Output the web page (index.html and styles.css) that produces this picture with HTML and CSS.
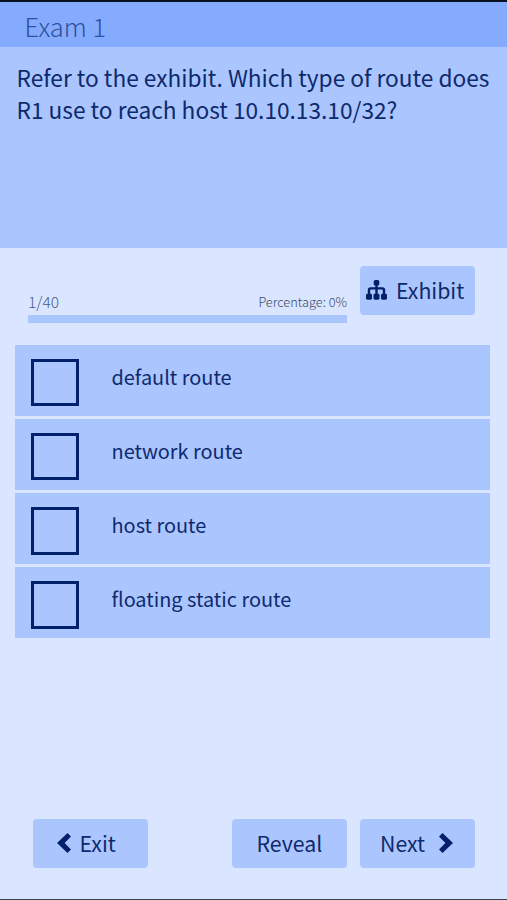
FILE: index.html
```html
<!DOCTYPE html>
<html lang="en">
<head>
<meta charset="utf-8">
<title>Exam 1</title>
<link rel="stylesheet" href="styles.css">
</head>
<body>
<main class="app">
  <header class="title"><span>Exam 1</span></header>
  <section class="question">
    <p><span class="line-one">Refer to the exhibit. Which type of route does</span><br><span class="line-two">R1 use to reach host 10.10.13.10/32?</span></p>
  </section>
  <section class="status">
    <div class="progress">
      <div class="labels"><span class="count">1/40</span><span class="percent">Percentage: 0%</span></div>
      <div class="track"></div>
    </div>
    <button class="btn exhibit">
      <svg class="sitemap" viewBox="0 0 21 20"><path d="M10.500 4v11M3 15v-5q0-1.600 1.600-1.600h11.800q1.600 0 1.600 1.600V15" fill="none" stroke="currentColor" stroke-width="2.400"/><rect x="7.700" y="0" width="5.600" height="5.600" rx="1.600"/><rect x="0" y="13.700" width="6" height="6" rx="1.400"/><rect x="7.500" y="13.700" width="6" height="6" rx="1.400"/><rect x="15" y="13.700" width="6" height="6" rx="1.400"/></svg>
      <span>Exhibit</span>
    </button>
  </section>
  <ul class="options">
    <li><i class="box"></i><span>default route</span></li>
    <li><i class="box"></i><span>network route</span></li>
    <li><i class="box"></i><span>host route</span></li>
    <li><i class="box"></i><span>floating static route</span></li>
  </ul>
  <footer class="actions">
    <button class="btn exit"><svg class="chevron" viewBox="0 0 14 20"><path d="M10.500 0L14 3.500 7.600 10 14 16.500 10.500 20 0 10z"/></svg><span>Exit</span></button>
    <button class="btn reveal"><span>Reveal</span></button>
    <button class="btn next"><span>Next</span><svg class="chevron" viewBox="0 0 14 20"><path d="M3.500 0L0 3.500 6.400 10 0 16.500 3.500 20 14 10z"/></svg></button>
  </footer>
</main>
</body>
</html>
```
FILE: styles.css
```css
* { box-sizing: border-box; }
body {
  margin: 0;
  background: #dae6ff;
  color: #0e2a6c;
  font-family: "Noto Sans CJK JP", "Noto Sans", sans-serif;
}
.app {
  height: 900px;
  display: flex;
  flex-direction: column;
  border-top: 2px solid #0a1020;
  border-bottom: 1px solid #34454f;
  white-space: nowrap;
}
.title {
  height: 45px;
  padding: 4px 0 0 24.500px;
  background: #85abff;
  color: #2f509b;
  font-size: 25.500px;
  font-weight: 300;
  line-height: 40px;
}
.question {
  height: 201px;
  padding: 15px 0 0 16.500px;
  background: #abc5ff;
  font-size: 22.700px;
  line-height: 32px;
}
.question p { margin: 0; }
.status {
  height: 96.500px;
  display: flex;
  gap: 13px;
  padding: 18px 0 0 28px;
}
.progress { width: 319px; padding-top: 23px; }
.labels {
  display: flex;
  justify-content: space-between;
  height: 26px;
  line-height: 25px;
  color: #4b5a86;
  font-weight: 300;
}
.count { font-size: 15.500px; }
.percent { font-size: 12.800px; color: #3f4b69; }
.track { height: 8px; background: #abc5ff; }
.btn {
  display: flex;
  align-items: center;
  width: 115px;
  height: 48.500px;
  padding: 0;
  border: 0;
  border-radius: 4px;
  background: #abc5ff;
  color: #0e2a6c;
  font: 21.300px/48px "Noto Sans CJK JP", "Noto Sans", sans-serif;
}
.btn span { height: 48px; }
.btn svg { fill: currentColor; color: #03206b; flex: none; }
.sitemap { width: 21px; height: 20px; margin: 0 9.500px 0 5.500px; }
.chevron { width: 14px; height: 20px; margin-bottom: 1px; }
.options {
  list-style: none;
  margin: 0 17.500px 0 15px;
  padding: 0;
  display: grid;
  gap: 3.300px;
}
.options li {
  display: flex;
  height: 71px;
  padding: 14px 16px;
  background: #abc5ff;
  font-size: 19.900px;
}
.options span { line-height: 36px; }
.box { width: 47.500px; height: 47.500px; margin-right: 33px; border: 3px solid #03206b; flex: none; }
.actions { display: flex; gap: 13px; margin: auto 32px 31.500px 33px; }
.exit { margin-right: 71px; padding-left: 24px; gap: 8.500px; }
.reveal { padding-left: 24.500px; }
.next { padding-left: 20px; gap: 14px; }
```
